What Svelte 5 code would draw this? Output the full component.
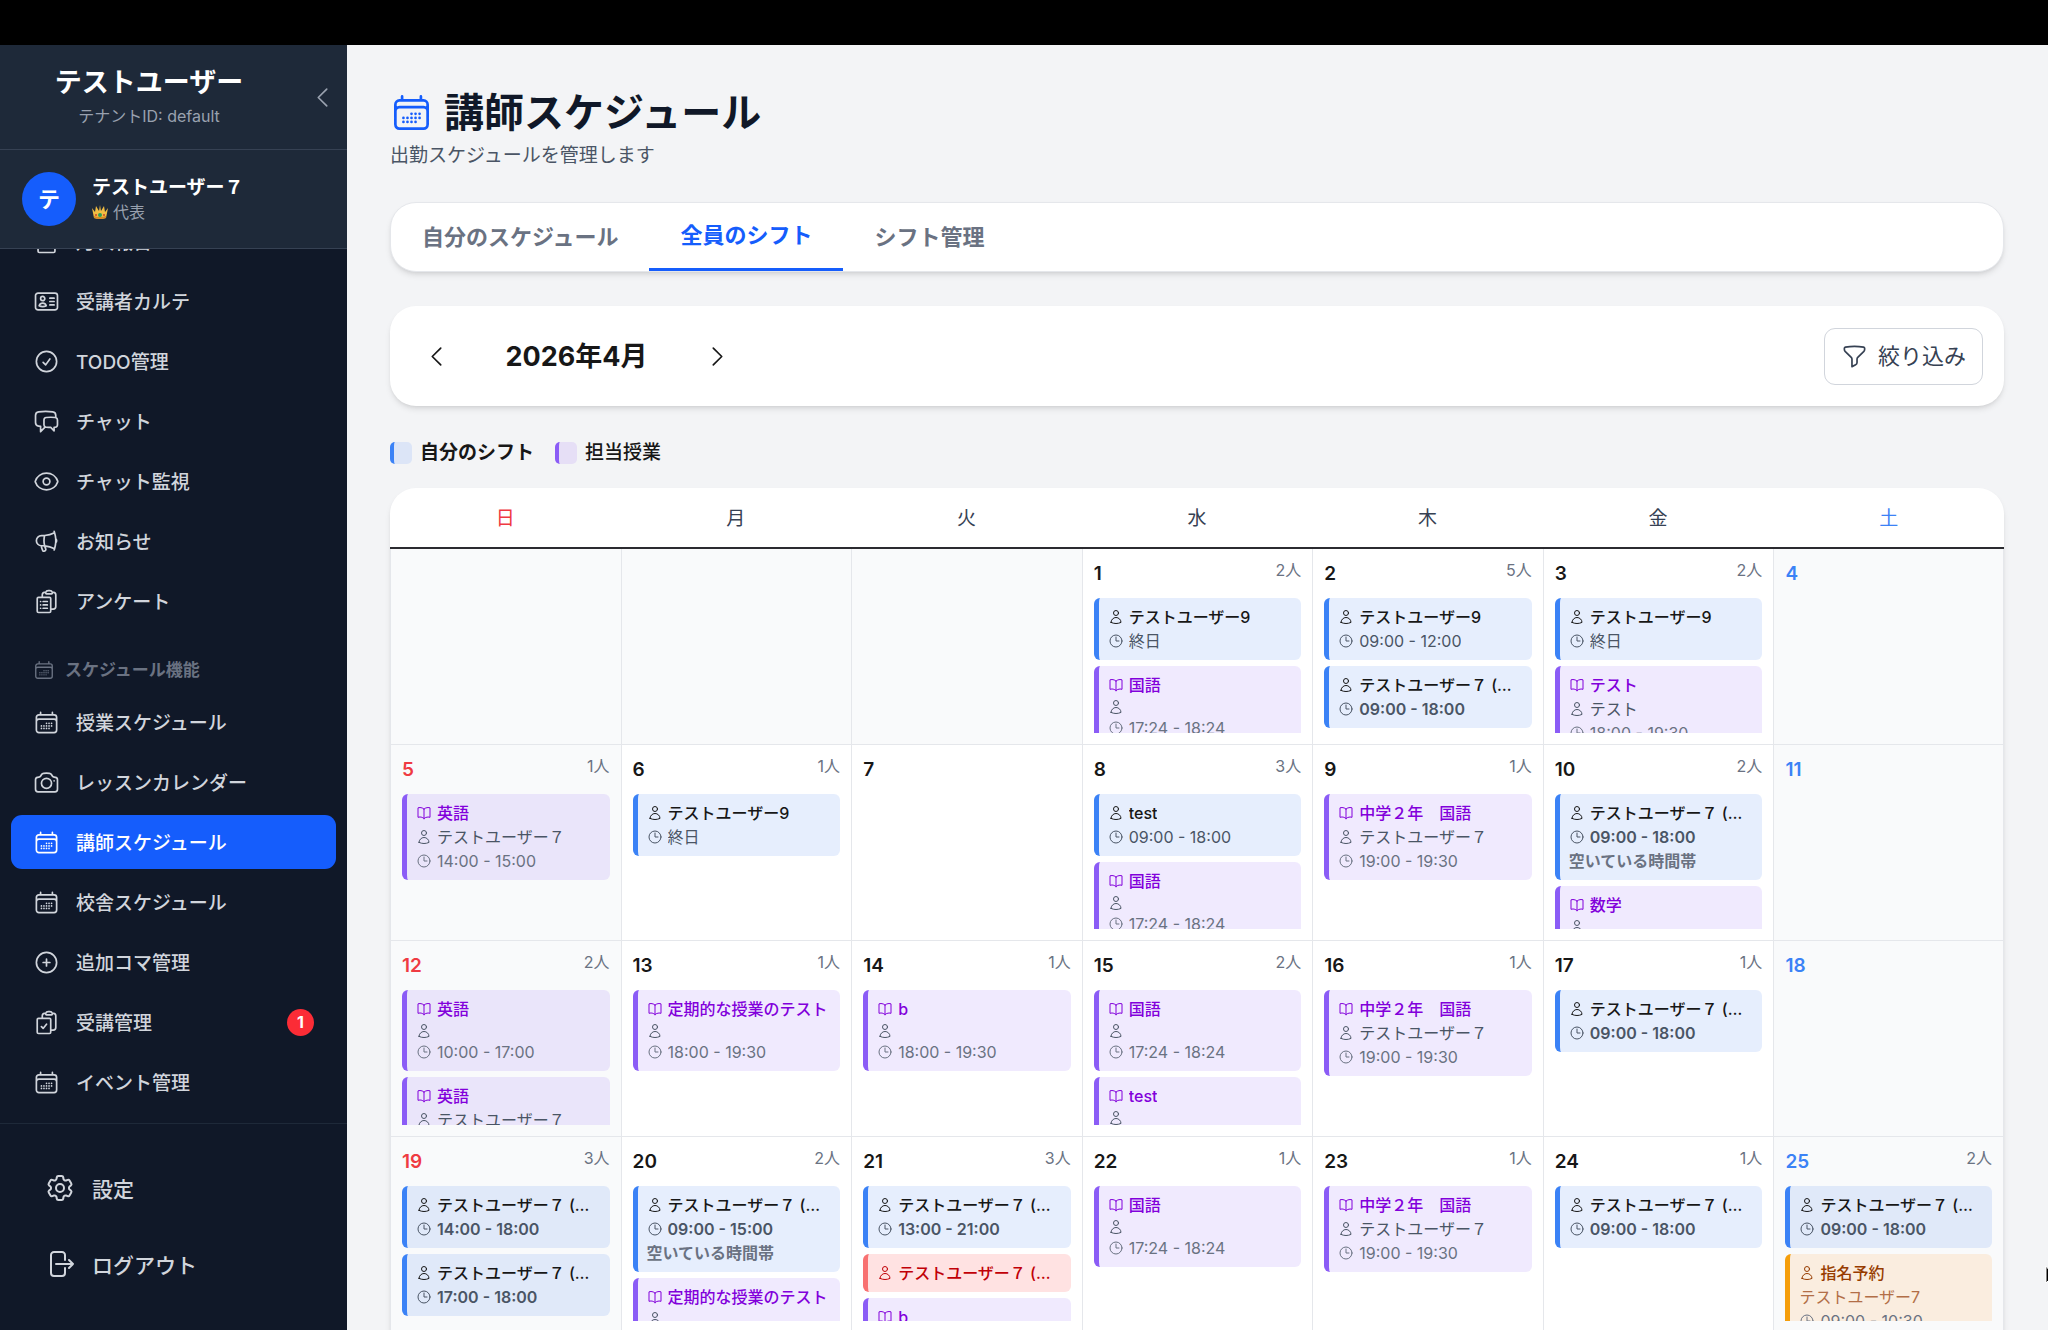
<script>
    const icons = {
        document:
            "M19.5 14.25v-2.625a3.375 3.375 0 0 0-3.375-3.375h-1.5A1.125 1.125 0 0 1 13.5 7.125v-1.5a3.375 3.375 0 0 0-3.375-3.375H8.25m0 12.75h7.5m-7.5 3H12M10.5 2.25H5.625c-.621 0-1.125.504-1.125 1.125v17.25c0 .621.504 1.125 1.125 1.125h12.75c.621 0 1.125-.504 1.125-1.125V11.25a9 9 0 0 0-9-9Z",
        idCard: "M15 9h3.75M15 12h3.75M15 15h3.75M4.5 19.5h15a2.25 2.25 0 0 0 2.25-2.25V6.75A2.25 2.25 0 0 0 19.5 4.5h-15a2.25 2.25 0 0 0-2.25 2.25v10.5A2.25 2.25 0 0 0 4.5 19.5Zm6-10.125a1.875 1.875 0 1 1-3.75 0 1.875 1.875 0 0 1 3.75 0Zm1.294 6.336a6.721 6.721 0 0 1-3.17.789 6.721 6.721 0 0 1-3.168-.789 3.376 3.376 0 0 1 6.338 0Z",
        check: "M9 12.75 11.25 15 15 9.75M21 12a9 9 0 1 1-18 0 9 9 0 0 1 18 0Z",
        chat: "M20.25 8.511c.884.284 1.5 1.128 1.5 2.097v4.286c0 1.136-.847 2.1-1.98 2.193-.34.027-.68.052-1.02.072v3.091l-3-3c-1.354 0-2.694-.055-4.02-.163a2.115 2.115 0 0 1-.825-.242m9.345-8.334a2.126 2.126 0 0 0-.476-.095 48.64 48.64 0 0 0-8.048 0c-1.131.094-1.976 1.057-1.976 2.192v4.286c0 .837.46 1.58 1.155 1.951m9.345-8.334V6.637c0-1.621-1.152-3.026-2.76-3.235A48.455 48.455 0 0 0 11.25 3c-2.115 0-4.198.137-6.24.402-1.608.209-2.76 1.614-2.76 3.235v6.226c0 1.621 1.152 3.026 2.76 3.235.577.075 1.157.14 1.74.194V21l4.155-4.155",
        eye: "M2.036 12.322a1.012 1.012 0 0 1 0-.639C3.423 7.51 7.36 4.5 12 4.5c4.638 0 8.573 3.007 9.963 7.178.07.207.07.431 0 .639C20.577 16.49 16.64 19.5 12 19.5c-4.638 0-8.573-3.007-9.963-7.178ZM15 12a3 3 0 1 1-6 0 3 3 0 0 1 6 0Z",
        megaphone:
            "M10.34 15.84c-.688-.06-1.386-.09-2.09-.09H7.5a4.5 4.5 0 1 1 0-9h.75c.704 0 1.402-.03 2.09-.09m0 9.18c.253.962.584 1.892.985 2.783.247.55.06 1.21-.463 1.511l-.657.38c-.551.318-1.26.117-1.527-.461a20.845 20.845 0 0 1-1.44-4.282m3.102.069a18.03 18.03 0 0 1-.59-4.59c0-1.586.205-3.124.59-4.59m0 9.18a23.848 23.848 0 0 1 8.835 2.535M10.34 6.66a23.847 23.847 0 0 0 8.835-2.535m0 0A23.74 23.74 0 0 0 18.795 3m.38 1.125a23.91 23.91 0 0 1 1.014 5.395m-1.014 8.855c-.118.38-.245.754-.38 1.125m.38-1.125a23.91 23.91 0 0 0 1.014-5.395m0-3.46c.495.413.811 1.035.811 1.73 0 .695-.316 1.317-.811 1.73m0-3.46a24.347 24.347 0 0 1 0 3.46",
        clipboardList:
            "M9 12h3.75M9 15h3.75M9 18h3.75m3 .75H18a2.25 2.25 0 0 0 2.25-2.25V6.108c0-1.135-.845-2.098-1.976-2.192a48.424 48.424 0 0 0-1.123-.08m-5.801 0c-.065.21-.1.433-.1.664 0 .414.336.75.75.75h4.5a.75.75 0 0 0 .75-.75 2.25 2.25 0 0 0-.1-.664m-5.8 0A2.251 2.251 0 0 1 13.5 2.25H15c1.012 0 1.867.668 2.15 1.586m-5.8 0c-.376.023-.75.05-1.124.08C9.095 4.01 8.25 4.973 8.25 6.108V8.25m0 0H4.875c-.621 0-1.125.504-1.125 1.125v11.25c0 .621.504 1.125 1.125 1.125h9.75c.621 0 1.125-.504 1.125-1.125V9.375c0-.621-.504-1.125-1.125-1.125H8.25ZM6.75 12h.008v.008H6.75V12Zm0 3h.008v.008H6.75V15Zm0 3h.008v.008H6.75V18Z",
        clipboardCheck:
            "M11.35 3.836c-.065.21-.1.433-.1.664 0 .414.336.75.75.75h4.5a.75.75 0 0 0 .75-.75 2.25 2.25 0 0 0-.1-.664m-5.8 0A2.251 2.251 0 0 1 13.5 2.25H15c1.012 0 1.867.668 2.15 1.586m-5.8 0c-.376.023-.75.05-1.124.08C9.095 4.01 8.25 4.973 8.25 6.108V8.25m8.9-4.414c.376.023.75.05 1.124.08 1.131.094 1.976 1.057 1.976 2.192V16.5A2.25 2.25 0 0 1 18 18.75h-2.25m-7.5-10.5H4.875c-.621 0-1.125.504-1.125 1.125v11.25c0 .621.504 1.125 1.125 1.125h9.75c.621 0 1.125-.504 1.125-1.125V18.75m-7.5-10.5h6.375c.621 0 1.125.504 1.125 1.125v9.375m-8.25-3 1.5 1.5 3-3.75",
        calendar:
            "M6.75 3v2.25M17.25 3v2.25M3 18.75V7.5a2.25 2.25 0 0 1 2.25-2.25h13.5A2.25 2.25 0 0 1 21 7.5v11.25m-18 0A2.25 2.25 0 0 0 5.25 21h13.5A2.25 2.25 0 0 0 21 18.75m-18 0v-7.5A2.25 2.25 0 0 1 5.25 9h13.5A2.25 2.25 0 0 1 21 11.25v7.5m-9-6h.008v.008H12v-.008ZM12 15h.008v.008H12V15Zm0 2.25h.008v.008H12v-.008ZM9.75 15h.008v.008H9.75V15Zm0 2.25h.008v.008H9.75v-.008ZM7.5 15h.008v.008H7.5V15Zm0 2.25h.008v.008H7.5v-.008Zm6.75-4.5h.008v.008h-.008v-.008Zm0 2.25h.008v.008h-.008V15Zm0 2.25h.008v.008h-.008v-.008Zm2.25-4.5h.008v.008H16.5v-.008Zm0 2.25h.008v.008H16.5V15Z",
        camera: "M6.827 6.175A2.31 2.31 0 0 1 5.186 7.23c-.38.054-.757.112-1.134.175C2.999 7.58 2.25 8.507 2.25 9.574V18a2.25 2.25 0 0 0 2.25 2.25h15A2.25 2.25 0 0 0 21.75 18V9.574c0-1.067-.75-1.994-1.802-2.169a47.865 47.865 0 0 0-1.134-.175 2.31 2.31 0 0 1-1.64-1.055l-.822-1.316a2.192 2.192 0 0 0-1.736-1.039 48.774 48.774 0 0 0-5.232 0 2.192 2.192 0 0 0-1.736 1.039l-.821 1.316ZM16.5 12.75a4.5 4.5 0 1 1-9 0 4.5 4.5 0 0 1 9 0ZM18.75 10.5h.008v.008h-.008V10.5Z",
        plus: "M12 9v6m3-3H9m12 0a9 9 0 1 1-18 0 9 9 0 0 1 18 0Z",
        cog: "M9.594 3.94c.09-.542.56-.94 1.11-.94h2.593c.55 0 1.02.398 1.11.94l.213 1.281c.063.374.313.686.645.87.074.04.147.083.22.127.325.196.72.257 1.075.124l1.217-.456a1.125 1.125 0 0 1 1.37.49l1.296 2.247a1.125 1.125 0 0 1-.26 1.431l-1.003.827c-.293.241-.438.613-.43.992a7.723 7.723 0 0 1 0 .255c-.008.378.137.75.43.991l1.004.827c.424.35.534.955.26 1.43l-1.298 2.247a1.125 1.125 0 0 1-1.369.491l-1.217-.456c-.355-.133-.75-.072-1.076.124a6.47 6.47 0 0 1-.22.128c-.331.183-.581.495-.644.869l-.213 1.281c-.09.543-.56.94-1.11.94h-2.594c-.55 0-1.019-.398-1.11-.94l-.213-1.281c-.062-.374-.312-.686-.644-.87a6.52 6.52 0 0 1-.22-.127c-.325-.196-.72-.257-1.076-.124l-1.217.456a1.125 1.125 0 0 1-1.369-.49l-1.297-2.247a1.125 1.125 0 0 1 .26-1.431l1.004-.827c.292-.24.437-.613.43-.991a6.932 6.932 0 0 1 0-.255c.007-.38-.138-.751-.43-.992l-1.004-.827a1.125 1.125 0 0 1-.26-1.43l1.297-2.247a1.125 1.125 0 0 1 1.37-.491l1.216.456c.356.133.751.072 1.076-.124.072-.044.146-.086.22-.128.332-.183.582-.495.644-.869l.214-1.28ZM15 12a3 3 0 1 1-6 0 3 3 0 0 1 6 0Z",
        logout: "M15.75 9V5.25A2.25 2.25 0 0 0 13.5 3h-6a2.25 2.25 0 0 0-2.25 2.25v13.5A2.25 2.25 0 0 0 7.5 21h6a2.25 2.25 0 0 0 2.25-2.25V15m3 0 3-3m0 0-3-3m3 3H9",
        funnel: "M12 3c2.755 0 5.455.232 8.083.678.533.09.917.556.917 1.096v1.044a2.25 2.25 0 0 1-.659 1.591l-5.432 5.432a2.25 2.25 0 0 0-.659 1.591v2.927a2.25 2.25 0 0 1-1.244 2.013L9.75 21v-6.568a2.25 2.25 0 0 0-.659-1.591L3.659 7.409A2.25 2.25 0 0 1 3 5.818V4.774c0-.54.384-1.006.917-1.096A48.32 48.32 0 0 1 12 3Z",
        left: "M15.75 19.5 8.25 12l7.5-7.5",
        right: "m8.25 4.5 7.5 7.5-7.5 7.5",
        user: "M15.75 6a3.75 3.75 0 1 1-7.5 0 3.75 3.75 0 0 1 7.5 0ZM4.501 20.118a7.5 7.5 0 0 1 14.998 0A17.933 17.933 0 0 1 12 21.75c-2.676 0-5.216-.584-7.499-1.632Z",
        clock: "M12 6v6h4.5m4.5 0a9 9 0 1 1-18 0 9 9 0 0 1 18 0Z",
        book: "M12 6.042A8.967 8.967 0 0 0 6 3.75c-1.052 0-2.062.18-3 .512v14.25A8.987 8.987 0 0 1 6 18c2.305 0 4.408.867 6 2.292m0-14.25a8.966 8.966 0 0 1 6-2.292c1.052 0 2.062.18 3 .512v14.25A8.987 8.987 0 0 0 18 18a8.967 8.967 0 0 0-6 2.292m0-14.25v14.25",
    };

    const mainNav = [
        { icon: "document", label: "月次報告" },
        { icon: "idCard", label: "受講者カルテ" },
        { icon: "check", label: "TODO管理" },
        { icon: "chat", label: "チャット" },
        { icon: "eye", label: "チャット監視" },
        { icon: "megaphone", label: "お知らせ" },
        { icon: "clipboardList", label: "アンケート" },
    ];

    const scheduleNav = [
        { icon: "calendar", label: "授業スケジュール" },
        { icon: "camera", label: "レッスンカレンダー" },
        { icon: "calendar", label: "講師スケジュール", active: true },
        { icon: "calendar", label: "校舎スケジュール" },
        { icon: "plus", label: "追加コマ管理" },
        { icon: "clipboardCheck", label: "受講管理", badge: 1 },
        { icon: "calendar", label: "イベント管理" },
    ];

    const tabs = ["自分のスケジュール", "全員のシフト", "シフト管理"];
    let activeTab = $state("全員のシフト");

    const weekdays = ["日", "月", "火", "水", "木", "金", "土"];

    const me = "テストユーザー７";
    const free = "空いている時間帯";

    // シフト（青）
    const shift = (name, time) => ({ type: "shift", name, time });

    // 自分のシフト
    const own = (time, note) => ({
        type: "shift",
        own: true,
        name: me + " (自分)",
        time,
        note,
    });

    // 担当授業（紫）
    const lesson = (name, teacher, time) => ({
        type: "lesson",
        name,
        teacher,
        time,
    });

    const weeks = [
        [
            {},
            {},
            {},
            {
                date: 1,
                count: 2,
                events: [
                    shift("テストユーザー9", "終日"),
                    lesson("国語", "", "17:24 - 18:24"),
                ],
            },
            {
                date: 2,
                count: 5,
                events: [
                    shift("テストユーザー9", "09:00 - 12:00"),
                    own("09:00 - 18:00"),
                ],
            },
            {
                date: 3,
                count: 2,
                events: [
                    shift("テストユーザー9", "終日"),
                    lesson("テスト", "テスト", "18:00 - 19:30"),
                ],
            },
            { date: 4 },
        ],
        [
            { date: 5, count: 1, events: [lesson("英語", me, "14:00 - 15:00")] },
            { date: 6, count: 1, events: [shift("テストユーザー9", "終日")] },
            { date: 7 },
            {
                date: 8,
                count: 3,
                events: [
                    shift("test", "09:00 - 18:00"),
                    lesson("国語", "", "17:24 - 18:24"),
                ],
            },
            {
                date: 9,
                count: 1,
                events: [lesson("中学２年　国語", me, "19:00 - 19:30")],
            },
            {
                date: 10,
                count: 2,
                events: [
                    own("09:00 - 18:00", free),
                    lesson("数学", "", "18:00 - 19:30"),
                ],
            },
            { date: 11 },
        ],
        [
            {
                date: 12,
                count: 2,
                events: [
                    lesson("英語", "", "10:00 - 17:00"),
                    lesson("英語", me, "14:00 - 15:00"),
                ],
            },
            {
                date: 13,
                count: 1,
                events: [lesson("定期的な授業のテスト", "", "18:00 - 19:30")],
            },
            { date: 14, count: 1, events: [lesson("b", "", "18:00 - 19:30")] },
            {
                date: 15,
                count: 2,
                events: [
                    lesson("国語", "", "17:24 - 18:24"),
                    lesson("test", "", "18:00 - 19:30"),
                ],
            },
            {
                date: 16,
                count: 1,
                events: [lesson("中学２年　国語", me, "19:00 - 19:30")],
            },
            { date: 17, count: 1, events: [own("09:00 - 18:00")] },
            { date: 18 },
        ],
        [
            {
                date: 19,
                count: 3,
                events: [own("14:00 - 18:00"), own("17:00 - 18:00")],
            },
            {
                date: 20,
                count: 2,
                events: [
                    own("09:00 - 15:00", free),
                    lesson("定期的な授業のテスト", "", "18:00 - 19:30"),
                ],
            },
            {
                date: 21,
                count: 3,
                events: [
                    own("13:00 - 21:00"),
                    { type: "absent", name: me + " (欠勤)" },
                    lesson("b", "", "18:00 - 19:30"),
                ],
            },
            {
                date: 22,
                count: 1,
                events: [lesson("国語", "", "17:24 - 18:24")],
            },
            {
                date: 23,
                count: 1,
                events: [lesson("中学２年　国語", me, "19:00 - 19:30")],
            },
            { date: 24, count: 1, events: [own("09:00 - 18:00")] },
            {
                date: 25,
                count: 2,
                events: [
                    own("09:00 - 18:00"),
                    {
                        type: "booking",
                        name: "指名予約",
                        client: "テストユーザー7",
                        time: "09:00 - 10:30",
                    },
                ],
            },
        ],
        [
            { date: 26 },
            { date: 27 },
            { date: 28 },
            { date: 29 },
            { date: 30 },
            {},
            {},
        ],
    ];
</script>

{#snippet icon(name)}
    <svg class="icon" viewBox="0 0 24 24" aria-hidden="true">
        <path d={icons[name]} />
    </svg>
{/snippet}

{#snippet navList(items)}
    <ul class="nav-list">
        {#each items as item}
            <li>
                <a href="#top" class="nav-item" class:active={item.active}>
                    {@render icon(item.icon)}
                    <span class="nav-label">{item.label}</span>
                    {#if item.badge}
                        <span class="badge">{item.badge}</span>
                    {/if}
                </a>
            </li>
        {/each}
    </ul>
{/snippet}

<div class="screen">
    <div class="topbar"></div>

    <div class="layout">
        <aside class="sidebar">
            <header class="brand">
                <div class="brand-text">
                    <strong>テストユーザー</strong>
                    <span>テナントID: default</span>
                </div>
                <button class="collapse" aria-label="サイドバーを閉じる">
                    {@render icon("left")}
                </button>
            </header>

            <div class="profile">
                <div class="avatar">テ</div>
                <div class="profile-text">
                    <strong>テストユーザー７</strong>
                    <span class="role">
                        <svg
                            class="crown"
                            viewBox="0 0 16 16"
                            aria-hidden="true"
                        >
                            <path
                                class="gold"
                                d="M2 14 0 4l3 4 1-6 3 5 1-6 1 6 3-5 1 6 3-4-2 10Q8 16 2 14Z"
                            />
                            <path
                                class="band"
                                d="M2 12Q8 14 14 12v2Q8 16 2 14Z"
                            />
                            <circle class="emerald" cx="8" cy="11" r="2" />
                            <circle class="ruby" cx="4" cy="11" r="1" />
                            <circle class="ruby" cx="12" cy="11" r="1" />
                        </svg>
                        代表
                    </span>
                </div>
            </div>

            <nav class="nav">
                {@render navList(mainNav)}
                <h2 class="nav-heading">
                    {@render icon("calendar")}
                    スケジュール機能
                </h2>
                {@render navList(scheduleNav)}
            </nav>

            <footer class="side-footer">
                <a href="#top" class="footer-item">
                    {@render icon("cog")}
                    設定
                </a>
                <button class="footer-item">
                    {@render icon("logout")}
                    ログアウト
                </button>
            </footer>
        </aside>

        <main class="content">
            <h1>
                {@render icon("calendar")}
                講師スケジュール
            </h1>
            <p class="subtitle">出勤スケジュールを管理します</p>

            <div class="card tabs" role="tablist">
                {#each tabs as tab}
                    <button
                        class="tab"
                        class:selected={tab === activeTab}
                        role="tab"
                        aria-selected={tab === activeTab}
                        onclick={() => (activeTab = tab)}
                    >
                        {tab}
                    </button>
                {/each}
            </div>

            <div class="card month">
                <button class="step" aria-label="前の月">
                    {@render icon("left")}
                </button>
                <h2>2026年4月</h2>
                <button class="step" aria-label="次の月">
                    {@render icon("right")}
                </button>
                <button class="filter">
                    {@render icon("funnel")}
                    <span>絞り込み</span>
                </button>
            </div>

            <div class="legend">
                <span class="legend-item mine">
                    <i class="swatch"></i>
                    自分のシフト
                </span>
                <span class="legend-item lessons">
                    <i class="swatch"></i>
                    担当授業
                </span>
            </div>

            <div class="card calendar">
                <table>
                    <thead>
                        <tr>
                            {#each weekdays as day}
                                <th scope="col">{day}</th>
                            {/each}
                        </tr>
                    </thead>
                    <tbody>
                        {#each weeks as week}
                            <tr>
                                {#each week as day}
                                    <td class:blank={!day.date}>
                                        <div class="day">
                                            <div class="day-head">
                                                <span class="date">
                                                    {day.date ?? ""}
                                                </span>
                                                {#if day.count}
                                                    <span class="count">
                                                        {day.count}人
                                                    </span>
                                                {/if}
                                            </div>
                                            <div class="events">
                                                {#each day.events ?? [] as ev}
                                                    <div
                                                        class="event {ev.type}"
                                                        class:own={ev.own}
                                                    >
                                                        <div class="line name">
                                                            {@render icon(
                                                                ev.type ===
                                                                    "lesson"
                                                                    ? "book"
                                                                    : "user",
                                                            )}
                                                            <span>{ev.name}</span>
                                                        </div>
                                                        {#if ev.type === "lesson"}
                                                            <div
                                                                class="line teacher"
                                                                class:empty={!ev.teacher}
                                                            >
                                                                {@render icon(
                                                                    "user",
                                                                )}
                                                                <span>{ev.teacher}</span>
                                                            </div>
                                                        {/if}
                                                        {#if ev.client}
                                                            <div class="line client">
                                                                {ev.client}
                                                            </div>
                                                        {/if}
                                                        {#if ev.time}
                                                            <div class="line time">
                                                                {@render icon(
                                                                    "clock",
                                                                )}
                                                                <span>{ev.time}</span>
                                                            </div>
                                                        {/if}
                                                        {#if ev.note}
                                                            <div class="line note">
                                                                {ev.note}
                                                            </div>
                                                        {/if}
                                                    </div>
                                                {/each}
                                            </div>
                                        </div>
                                    </td>
                                {/each}
                            </tr>
                        {/each}
                    </tbody>
                </table>
            </div>
        </main>
    </div>

    <svg class="pointer" viewBox="0 0 12 20" aria-hidden="true">
        <path d="M1 1v17l4-4h6Z" />
    </svg>
</div>

<style>
    :global(body) {
        margin: 0;
        background: #f3f4f6;
    }

    .screen {
        position: relative;
        display: flex;
        flex-direction: column;
        height: 100vh;
        overflow: hidden;
        font-family: Inter, "Noto Sans CJK JP", sans-serif;
        font-size: 19px;
        color: #171717;
    }

    .screen :is(h1, h2, p, ul) {
        margin: 0;
        padding: 0;
    }

    button {
        border: 0;
        padding: 0;
        background: none;
        color: inherit;
        font: inherit;
        cursor: pointer;
    }

    a {
        color: inherit;
        text-decoration: none;
    }

    .icon {
        display: block;
        flex: none;
        width: 27px;
        height: 27px;
        fill: none;
        stroke: currentColor;
        stroke-width: 1.5;
        stroke-linecap: round;
        stroke-linejoin: round;
    }

    .topbar {
        flex: none;
        height: 45px;
        background: #000;
    }

    .layout {
        display: flex;
        flex: 1;
        min-height: 0;
    }

    /* Sidebar */
    .sidebar {
        display: flex;
        flex-direction: column;
        flex: none;
        width: 347px;
        background: #101828;
        color: #d1d5dc;
    }

    .brand,
    .profile {
        display: flex;
        align-items: center;
        flex: none;
        background: #1e2939;
        border-bottom: 1px solid #364153;
    }

    .brand {
        gap: 33px;
        height: 104px;
        padding: 0 11px 0 22px;
    }

    .brand-text {
        display: flex;
        flex-direction: column;
        flex: 1;
        text-align: center;
    }

    .brand-text strong {
        font-size: 27px;
        line-height: 38px;
        color: #fff;
    }

    .brand-text span {
        font-size: 16px;
        line-height: 28px;
        color: #99a1af;
    }

    .collapse {
        color: #99a1af;
    }

    .profile {
        gap: 16px;
        height: 98px;
        padding: 0 22px;
    }

    .avatar {
        display: flex;
        align-items: center;
        justify-content: center;
        width: 54px;
        height: 54px;
        border-radius: 50%;
        background: #155dfc;
        color: #fff;
        font-size: 22px;
        font-weight: 700;
        line-height: 50px;
    }

    .profile-text {
        display: flex;
        flex-direction: column;
    }

    .profile-text strong {
        line-height: 26px;
        color: #fff;
    }

    .role {
        display: flex;
        align-items: center;
        gap: 5px;
        font-size: 16px;
        line-height: 22px;
        color: #99a1af;
    }

    .crown {
        width: 16px;
        height: 16px;
    }

    .gold {
        fill: #f2bd42;
    }

    .band {
        fill: #d68b23;
    }

    .emerald {
        fill: #2e9e5b;
    }

    .ruby {
        fill: #c8452c;
    }

    .nav {
        display: flex;
        flex-direction: column;
        justify-content: flex-end;
        flex: 1;
        min-height: 0;
        padding: 0 11px 14px;
        overflow: hidden;
    }

    .nav-list {
        display: flex;
        flex-direction: column;
        gap: 6px;
        list-style: none;
    }

    .nav-item {
        display: flex;
        align-items: center;
        gap: 16px;
        height: 54px;
        padding: 0 22px;
        border-radius: 11px;
        font-weight: 500;
    }

    .nav-label {
        flex: 1;
        padding-bottom: 1px;
    }

    .nav-item.active {
        background: #155dfc;
        color: #fff;
    }

    .badge {
        width: 27px;
        border-radius: 14px;
        background: #fb2c36;
        color: #fff;
        font-size: 16px;
        font-weight: 700;
        line-height: 27px;
        text-align: center;
    }

    .screen .nav-heading {
        display: flex;
        align-items: center;
        gap: 10px;
        margin: 25px 0 8px;
        padding: 0 22px;
        font-size: 17px;
        font-weight: 700;
        line-height: 34px;
        color: #6a7282;
    }

    .nav-heading .icon {
        width: 22px;
        height: 22px;
    }

    .side-footer {
        display: flex;
        flex-direction: column;
        flex: none;
        gap: 11px;
        padding: 32px 33px 33px;
        border-top: 1px solid #1e2939;
    }

    .footer-item {
        display: flex;
        align-items: center;
        gap: 16px;
        box-sizing: border-box;
        height: 65px;
        padding: 0 11px 2px;
        font-size: 21px;
        font-weight: 500;
    }

    .footer-item .icon {
        width: 32px;
        height: 32px;
    }

    /* Main column */
    .content {
        flex: 1;
        min-width: 0;
        padding: 44px 44px 0 43px;
        overflow: hidden;
        background: #f3f4f6;
    }

    h1 {
        display: flex;
        align-items: center;
        gap: 11px;
        font-size: 40px;
        line-height: 47px;
        color: #101828;
    }

    h1 .icon {
        width: 43px;
        height: 43px;
        color: #155dfc;
    }

    .screen .subtitle {
        margin: 7px 0 33px;
        line-height: 26px;
        color: #4a5565;
    }

    .card {
        border-radius: 26px;
        background: #fff;
        box-shadow:
            0 4px 6px -1px rgba(0, 0, 0, 0.1),
            0 2px 4px -2px rgba(0, 0, 0, 0.1);
    }

    .tabs {
        display: flex;
        box-sizing: border-box;
        height: 70px;
        margin-bottom: 34px;
        border: 1px solid #e5e7eb;
    }

    .tab {
        padding: 0 31px 5px;
        font-size: 22px;
        font-weight: 600;
        color: #6a7282;
    }

    .tab.selected {
        border-bottom: 3px solid #155dfc;
        color: #155dfc;
    }

    .month {
        display: flex;
        align-items: center;
        box-sizing: border-box;
        height: 100px;
        margin-bottom: 36px;
        padding: 0 21px;
    }

    .step {
        display: flex;
        align-items: center;
        justify-content: center;
        width: 50px;
        height: 50px;
    }

    .month h2 {
        width: 231px;
        padding-bottom: 4px;
        font-size: 27px;
        text-align: center;
    }

    .filter {
        display: flex;
        align-items: center;
        gap: 10px;
        height: 57px;
        margin-left: auto;
        padding: 0 16px;
        border: 1px solid #d1d5dc;
        border-radius: 11px;
        font-size: 22px;
        color: #364153;
    }

    .filter span {
        padding-bottom: 4px;
    }

    .legend {
        display: flex;
        gap: 21px;
        margin-bottom: 24px;
        line-height: 22px;
    }

    .legend-item {
        display: flex;
        gap: 8px;
        font-weight: 500;
    }

    .legend-item.mine {
        font-weight: 700;
    }

    .swatch {
        box-sizing: border-box;
        width: 22px;
        height: 22px;
        border-left: 4px solid;
        border-radius: 5px;
    }

    .mine .swatch {
        border-color: #3b82f6;
        background: #dce5f7;
    }

    .lessons .swatch {
        border-color: #8b5cf6;
        background: #e6dff6;
    }

    /* Calendar */
    .calendar {
        overflow: hidden;
    }

    table {
        width: 100%;
        table-layout: fixed;
        border-collapse: separate;
        border-spacing: 0;
    }

    th {
        box-sizing: border-box;
        height: 61px;
        padding: 0 0 3px;
        border-bottom: 2px solid #2b2b30;
        font-size: 19px;
        font-weight: 400;
        color: #364153;
    }

    th:first-child,
    td:first-child .date {
        color: #ef3a42;
    }

    th:last-child,
    td:last-child .date {
        color: #3b82f6;
    }

    td {
        padding: 0;
        border-left: 1px solid #e5e7eb;
        border-bottom: 1px solid #e5e7eb;
    }

    td:last-child {
        border-right: 1px solid #e5e7eb;
    }

    td:first-child,
    td:last-child,
    .blank {
        background: #f9fafb;
    }

    .day {
        display: flex;
        flex-direction: column;
        box-sizing: border-box;
        height: 195px;
        padding: 11px;
    }

    .day-head {
        display: flex;
        justify-content: space-between;
        flex: none;
        height: 38px;
    }

    .date {
        font-weight: 600;
        line-height: 28px;
    }

    .count {
        font-size: 16px;
        line-height: 20px;
        color: #6a7282;
    }

    .events {
        display: flex;
        flex-direction: column;
        flex: 1;
        gap: 6px;
        min-height: 0;
        overflow: hidden;
    }

    .event {
        flex: none;
        padding: 7px 9px;
        border-left: 5px solid;
        border-radius: 6px;
        font-size: 16px;
    }

    .line {
        display: flex;
        align-items: center;
        gap: 5px;
        height: 24px;
        line-height: 24px;
        white-space: nowrap;
    }

    .line.empty {
        height: 19px;
    }

    .line span {
        overflow: hidden;
        text-overflow: ellipsis;
    }

    .event .icon {
        width: 16px;
        height: 16px;
    }

    .name {
        font-weight: 500;
    }

    .time,
    .teacher {
        color: #4a5565;
    }

    .shift {
        border-color: #3b82f6;
        background: rgba(59, 121, 240, 0.13);
    }

    .own .time {
        font-weight: 600;
    }

    .note {
        font-weight: 700;
        color: #6a7282;
    }

    .lesson {
        border-color: #8b5cf6;
        background: rgba(139, 92, 246, 0.13);
    }

    .lesson .name {
        color: #8200db;
    }

    .lesson .time,
    .booking .time {
        color: #6a7282;
    }

    .absent {
        border-color: #f87171;
        background: #ffe2e2;
        color: #c10007;
    }

    .booking {
        border-color: #f59e0b;
        background: #faeddf;
        color: #973c00;
    }

    .client {
        color: #b26e47;
    }

    .pointer {
        position: absolute;
        right: -9px;
        bottom: 45px;
        width: 12px;
        height: 20px;
        fill: #000;
        stroke: #fff;
    }
</style>
